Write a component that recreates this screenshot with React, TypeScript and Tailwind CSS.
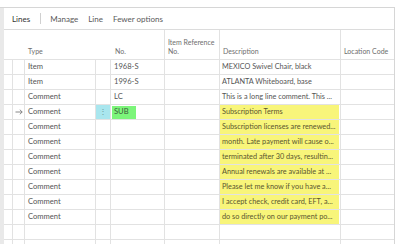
import React from "react";

type Row = {
  type: string;
  no?: string;
  desc: string;
  yellow?: boolean;
  selected?: boolean;
};

const rows: Row[] = [
  { type: "Item", no: "1968-S", desc: "MEXICO Swivel Chair, black" },
  { type: "Item", no: "1996-S", desc: "ATLANTA Whiteboard, base" },
  { type: "Comment", no: "LC", desc: "This is a long line comment.  This ..." },
  { type: "Comment", no: "SUB", desc: "Subscription Terms", yellow: true, selected: true },
  { type: "Comment", desc: "Subscription licenses are renewed...", yellow: true },
  { type: "Comment", desc: "month. Late payment will cause o...", yellow: true },
  { type: "Comment", desc: "terminated after 30 days, resultin...", yellow: true },
  { type: "Comment", desc: "Annual renewals are available at ...", yellow: true },
  { type: "Comment", desc: "Please let me know if you have a...", yellow: true },
  { type: "Comment", desc: "I accept check, credit card, EFT, a...", yellow: true },
  { type: "Comment", desc: "do so directly on our payment po...", yellow: true },
  { type: "", desc: "" },
  { type: "", desc: "" },
];

function Arrow() {
  return (
    <svg width="8" height="6" viewBox="0 0 8 6" fill="none" stroke="#7a7a7a" strokeWidth="0.9">
      <path d="M0.5 3H7.2M4.8 0.7L7.2 3L4.8 5.3" />
    </svg>
  );
}

function DataRow({ r }: { r: Row }) {
  return (
    <div className="flex h-[15px] shrink-0 border-b border-[#e2e2e2] text-[#555]">
      <div className="w-[9px] shrink-0 border-r border-[#e2e2e2]" />
      <div className="w-[12px] shrink-0 border-r border-[#e2e2e2] flex items-center justify-center">
        {r.selected ? <Arrow /> : null}
      </div>
      <div className="w-[71px] shrink-0 border-r border-[#e2e2e2] pl-[3px] flex items-center leading-none">
        {r.type}
      </div>
      <div
        className={
          "w-[15px] shrink-0 border-r border-[#e2e2e2] flex items-center justify-center leading-none " +
          (r.selected ? "bg-[#a9e6ee] text-[#6a9aa0]" : "")
        }
      >
        {r.selected ? "⋮" : ""}
      </div>
      <div className="w-[54px] shrink-0 border-r border-[#e2e2e2] flex items-center">
        {r.selected ? (
          <div className="ml-[1px] h-[13px] w-[24px] bg-[#7cf57a] pl-[2px] flex items-center leading-none text-[#3d5a3d]">
            {r.no}
          </div>
        ) : (
          <span className="pl-[3px] leading-none">{r.no ?? ""}</span>
        )}
      </div>
      <div className="w-[55px] shrink-0 border-r border-[#e2e2e2]" />
      <div className="w-[121px] shrink-0 border-r border-[#e2e2e2] flex items-stretch">
        <div
          className={
            "flex-1 mr-[1px] pl-[2px] flex items-center overflow-hidden whitespace-nowrap leading-none text-[7.3px] " +
            (r.yellow ? "bg-[#f8f57a] text-[#5a5630]" : "")
          }
        >
          {r.desc}
        </div>
      </div>
      <div className="w-[53px] shrink-0" />
    </div>
  );
}

export default function App() {
  return (
    <div
      className="w-[400px] h-[244px] overflow-hidden bg-white flex flex-col text-[7.6px]"
      style={{ fontFamily: 'Lato, "Open Sans", sans-serif' }}
    >
      <div className="h-[7px] shrink-0" />
      <div className="flex-1 flex min-h-0">
        <div className="w-[395px] shrink-0 flex border-t border-r border-[#d6d6d6] min-h-0">
          <div className="w-[4px] shrink-0 bg-[#e9e9e9]" />
          <div className="flex-1 flex flex-col min-h-0">
            {/* toolbar */}
            <div className="h-[22px] shrink-0 flex items-center border-b border-[#dcdcdc] text-[8px] text-[#5a5a5a]">
              <span className="ml-[8px] text-[#333]">Lines</span>
              <div className="ml-[10px] h-[11px] w-px bg-[#d0d0d0]" />
              <span className="ml-[9px]">Manage</span>
              <span className="ml-[10px]">Line</span>
              <span className="ml-[10px]">Fewer options</span>
            </div>
            {/* header */}
            <div className="h-[30px] shrink-0 flex border-b border-[#e2e2e2] text-[#6e6e6e] text-[7px]">
              <div className="w-[107px] shrink-0 flex items-end pb-[4px] pl-[24px] leading-none">Type</div>
              <div className="w-[54px] shrink-0 border-r border-[#e2e2e2] flex items-end pb-[4px] pl-[4px] leading-none">
                No.
              </div>
              <div className="w-[55px] shrink-0 border-r border-[#e2e2e2] flex flex-col justify-end pb-[3px] pl-[3px] leading-[9px]">
                <span className="whitespace-nowrap overflow-hidden">Item Reference</span>
                <span>No.</span>
              </div>
              <div className="w-[121px] shrink-0 border-r border-[#e2e2e2] flex items-end pb-[4px] pl-[3px] leading-none">
                Description
              </div>
              <div className="w-[53px] shrink-0 flex items-end pb-[4px] pl-[3px] leading-none whitespace-nowrap">
                Location Code
              </div>
            </div>
            {/* rows */}
            <div className="flex flex-col">
              {rows.map((r, i) => (
                <DataRow key={i} r={r} />
              ))}
            </div>
          </div>
        </div>
        <div className="flex-1" />
      </div>
    </div>
  );
}
